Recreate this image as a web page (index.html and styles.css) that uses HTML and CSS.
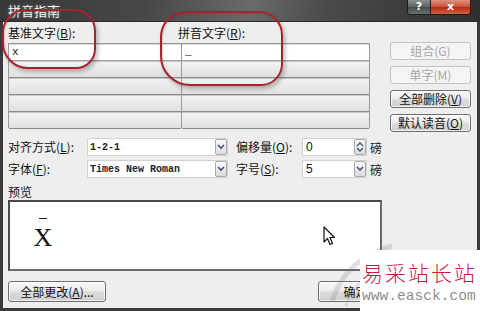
FILE: index.html
```html
<!DOCTYPE html>
<html lang="zh-CN">
<head>
    <meta charset="UTF-8">
    <title>拼音指南</title>
    <link rel="stylesheet" href="styles.css">
</head>
<body>
    <div class="window">
        <div class="titlebar">
            <span class="title">拼音指南</span>
            <div class="caption">
                <span class="cap-btn help">?</span>
                <span class="cap-btn close">x</span>
            </div>
        </div>

        <div class="client">
            <div class="top">
                <div class="grid-area">
                    <div class="headers">
                        <span class="head-left">基准文字(<u>B</u>):</span>
                        <span>拼音文字(<u>R</u>):</span>
                    </div>
                    <div class="grid">
                        <div class="cell active">x</div>
                        <div class="cell active">_</div>
                        <div class="cell"></div><div class="cell"></div>
                        <div class="cell"></div><div class="cell"></div>
                        <div class="cell"></div><div class="cell"></div>
                        <div class="cell"></div><div class="cell"></div>
                    </div>
                </div>
                <div class="side">
                    <button class="btn disabled">组合(G)</button>
                    <button class="btn disabled">单字(M)</button>
                    <button class="btn">全部删除(<u>V</u>)</button>
                    <button class="btn">默认读音(<u>O</u>)</button>
                </div>
            </div>

            <div class="options">
                <div class="opt-row">
                    <span class="opt-label">对齐方式(<u>L</u>):</span>
                    <div class="combo">
                        <span class="combo-text">1-2-1</span>
                        <span class="drop"><svg width="8" height="6" viewBox="0 0 8 6"><path d="M1 1 L4 4 L7 1" fill="none" stroke="#3f5478" stroke-width="1.6"/></svg></span>
                    </div>
                    <span class="opt-label second">偏移量(<u>O</u>):</span>
                    <div class="field">
                        <span class="field-text">0</span>
                        <span class="spin"><svg width="8" height="12" viewBox="0 0 8 12"><path d="M1 5 L4 2 L7 5" fill="none" stroke="#3f5478" stroke-width="1.4"/><path d="M1 7 L4 10 L7 7" fill="none" stroke="#3f5478" stroke-width="1.4"/></svg></span>
                    </div>
                    <span class="unit">磅</span>
                </div>
                <div class="opt-row">
                    <span class="opt-label">字体(<u>F</u>):</span>
                    <div class="combo">
                        <span class="combo-text">Times New Roman</span>
                        <span class="drop"><svg width="8" height="6" viewBox="0 0 8 6"><path d="M1 1 L4 4 L7 1" fill="none" stroke="#3f5478" stroke-width="1.6"/></svg></span>
                    </div>
                    <span class="opt-label second">字号(<u>S</u>):</span>
                    <div class="field">
                        <span class="field-text">5</span>
                        <span class="drop"><svg width="8" height="6" viewBox="0 0 8 6"><path d="M1 1 L4 4 L7 1" fill="none" stroke="#3f5478" stroke-width="1.6"/></svg></span>
                    </div>
                    <span class="unit">磅</span>
                </div>
            </div>

            <div class="preview-label">预览</div>
            <div class="preview">
                <div class="ruby">
                    <span class="macron"></span>
                    <span class="base">X</span>
                </div>
            </div>

            <div class="footer">
                <button class="btn wide">全部更改(<u>A</u>)...</button>
                <button class="btn ok">确定</button>
            </div>
        </div>

        <!-- annotations drawn over the dialog -->
        <div class="mark mark-base"></div>
        <div class="mark mark-pinyin"></div>

        <svg class="cursor" width="13" height="20" viewBox="0 0 13 20">
            <path d="M1 1 L1 16 L4.5 12.5 L7 18.5 L9.5 17.5 L7 11.5 L11.5 11.5 Z" fill="#fff" stroke="#111" stroke-width="1.2" stroke-linejoin="round"/>
        </svg>

        <svg class="swoosh" width="80" height="70" viewBox="0 0 80 70">
            <path d="M10 62 Q 22 20 70 6" fill="none" stroke="rgba(120,120,120,0.22)" stroke-width="5"/>
            <path d="M24 66 Q 34 34 76 20" fill="none" stroke="rgba(120,120,120,0.15)" stroke-width="3"/>
        </svg>

        <div class="watermark">
            <div class="wm-name">易采站长站</div>
            <div class="wm-url">www.easck.com</div>
        </div>
    </div>
</body>
</html>
```

FILE: styles.css
```css
body {
    margin: 0;
    padding: 0;
    font-family: "Noto Sans CJK SC", "DejaVu Sans", sans-serif;
    font-size: 12px;
    color: #111;
    background-color: #ffffff;
}
u {
    text-decoration: underline;
}
.window {
    position: relative;
    width: 480px;
    height: 311px;
    display: flex;
    flex-direction: column;
    overflow: hidden;
}
.titlebar {
    height: 22px;
    flex-shrink: 0;
    display: flex;
    justify-content: space-between;
    align-items: flex-start;
    padding: 0 9px 0 8px;
    background: linear-gradient(100deg, #383838 0%, #474747 30%, #6a6a6a 52%, #4a4a4a 68%, #2f2f2f 100%);
    border-bottom: 1px solid #2a2a2a;
    box-sizing: border-box;
}
.title {
    line-height: 21px;
    font-size: 13px;
    color: #f2f2f2;
    text-shadow: 0 0 3px rgba(255, 255, 255, 0.35);
}
.caption {
    display: flex;
}
.cap-btn {
    height: 15px;
    box-sizing: border-box;
    border: 1px solid #1e1e1e;
    border-top: none;
    color: #ffffff;
    font-family: "DejaVu Sans", sans-serif;
    font-weight: bold;
    font-size: 11px;
    line-height: 13px;
    text-align: center;
}
.help {
    width: 24px;
    border-radius: 0 0 0 3px;
    background: linear-gradient(#8c9090, #5c6262 50%, #454a4a 51%, #6a7070);
}
.close {
    width: 40px;
    border-left: none;
    border-radius: 0 0 3px 0;
    background: linear-gradient(#e09080, #c85038 50%, #b02a12 51%, #d06040);
}
.client {
    flex: 1;
    min-height: 0;
    background-color: #eeeeee;
    border: 3px solid #3b3b3b;
    border-top: none;
    padding: 4px 6px 0 5px;
    display: flex;
    flex-direction: column;
}
.top {
    height: 102px;
    flex-shrink: 0;
    display: flex;
    gap: 20px;
}
.grid-area {
    width: 362px;
}
.headers {
    height: 17px;
    display: flex;
    line-height: 14px;
}
.head-left {
    width: 170px;
}
.grid {
    display: grid;
    grid-template-columns: 172px 1fr;
    grid-auto-rows: 17px;
    border: 1px solid #9a9a9a;
    background-color: #9a9a9a;
    column-gap: 1px;
    box-sizing: border-box;
    height: 85px;
}
.cell {
    background: linear-gradient(#f2f2f2, #e0e0e0);
    border-top: 1px solid #c8c8c8;
    border-bottom: 1px solid #8a8a8a;
    box-sizing: border-box;
    padding-left: 3px;
    font-family: "Liberation Mono", monospace;
    font-size: 11px;
    line-height: 14px;
}
.cell.active {
    background: #ffffff;
    border-top: 1px solid #d8d8d8;
    border-bottom: 1px solid #a0a0a0;
}
.side {
    width: 81px;
    padding-top: 16px;
    display: flex;
    flex-direction: column;
    gap: 6px;
}
.btn {
    height: 20px;
    padding: 0;
    font-family: "Noto Sans CJK SC", "DejaVu Sans", sans-serif;
    font-size: 12px;
    line-height: 16px;
    color: #111;
    border: 1px solid #6e6e6e;
    border-radius: 3px;
    background: linear-gradient(#f8f8f8 0%, #ececec 48%, #dcdcdc 52%, #cfcfcf 100%);
    box-shadow: inset 0 0 0 1px rgba(255, 255, 255, 0.7);
}
.btn.disabled {
    color: #a6a6a6;
    border-color: #c2c2c2;
    background: #f4f4f4;
    box-shadow: none;
}
.options {
    margin-top: 10px;
    display: flex;
    flex-direction: column;
    gap: 4px;
}
.opt-row {
    height: 18px;
    display: flex;
    align-items: center;
}
.opt-label {
    width: 79px;
    line-height: 18px;
}
.opt-label.second {
    width: 66px;
    margin-left: 8px;
}
.combo,
.field {
    height: 18px;
    box-sizing: border-box;
    display: flex;
    align-items: center;
    justify-content: space-between;
    background-color: #ffffff;
    border: 1px solid #d2d2d2;
}
.combo {
    width: 141px;
}
.field {
    width: 65px;
}
.combo-text {
    padding-left: 2px;
    font-family: "Liberation Mono", monospace;
    font-size: 10px;
    font-weight: bold;
    color: #222;
}
.field-text {
    padding-left: 3px;
    font-family: "Liberation Sans", sans-serif;
    font-size: 12px;
}
.drop,
.spin {
    width: 12px;
    height: 16px;
    box-sizing: border-box;
    display: flex;
    align-items: center;
    justify-content: center;
    border: 1px solid #a9a9a9;
    border-radius: 2px;
    background: linear-gradient(#fafafa, #dadada);
}
.unit {
    margin-left: 3px;
}
.preview-label {
    margin-top: 5px;
    line-height: 17px;
}
.preview {
    width: 374px;
    height: 71px;
    flex-shrink: 0;
    box-sizing: border-box;
    background-color: #ffffff;
    border: 2px solid #4a4a4a;
    border-right-color: #6a6a6a;
    border-bottom-color: #6a6a6a;
    padding-left: 23px;
    padding-top: 12px;
}
.ruby {
    display: flex;
    flex-direction: column;
    align-items: center;
    width: 20px;
}
.macron {
    width: 8px;
    height: 0;
    margin-top: 4px;
    margin-bottom: 6px;
    border-top: 1.5px solid #222;
}
.base {
    font-family: "Liberation Serif", serif;
    font-size: 26px;
    line-height: 26px;
}
.footer {
    margin-top: 10px;
    display: flex;
    justify-content: space-between;
    padding-right: 78px;
}
.btn.wide {
    width: 98px;
    height: 21px;
}
.btn.ok {
    width: 75px;
    height: 21px;
}
.mark {
    position: absolute;
    border: 2px solid #a8222a;
    box-shadow: 2px 3px 4px rgba(60, 60, 60, 0.35), inset 1px 1px 2px rgba(60, 60, 60, 0.2);
}
.mark-base {
    left: 2px;
    top: 9px;
    width: 90px;
    height: 56px;
    border-radius: 24px 22px 20px 26px;
}
.mark-pinyin {
    left: 160px;
    top: 11px;
    width: 119px;
    height: 71px;
    border-radius: 26px 24px 22px 30px;
}
.cursor {
    position: absolute;
    left: 323px;
    top: 226px;
}
.swoosh {
    position: absolute;
    left: 322px;
    top: 240px;
}
.watermark {
    position: absolute;
    left: 360px;
    top: 250px;
    width: 120px;
    height: 61px;
    background-color: #ffffff;
    padding-left: 2px;
    box-sizing: border-box;
}
.wm-name {
    margin-top: 9px;
    font-size: 21px;
    line-height: 26px;
    letter-spacing: 2px;
    color: #c8173f;
    font-weight: 300;
}
.wm-url {
    margin-top: 4px;
    font-family: "Liberation Mono", monospace;
    font-size: 14.6px;
    line-height: 14px;
    color: #8e8e8e;
}
```
